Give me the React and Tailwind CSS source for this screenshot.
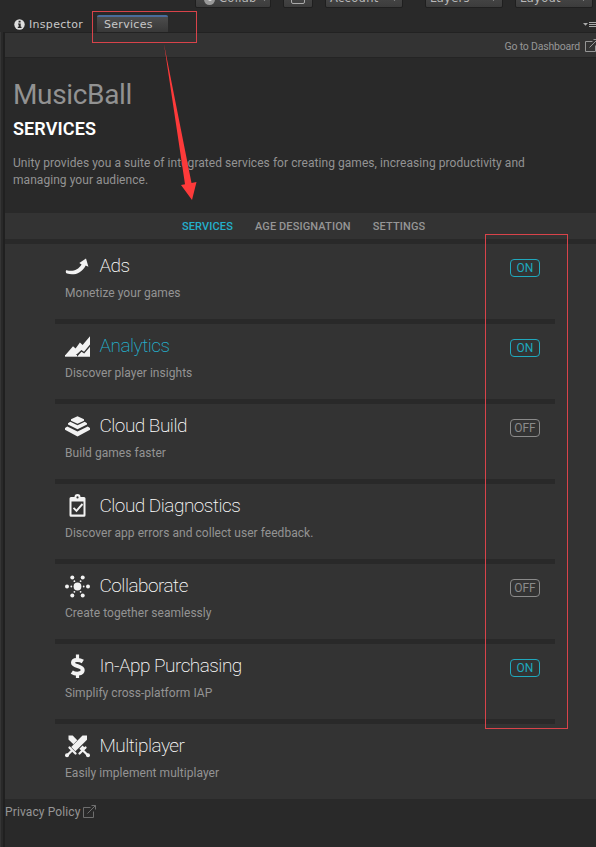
const EDITOR_FONT = "font-['DejaVu_Sans','Noto_Sans',sans-serif]";

function Caret({ className = "" }) {
  return (
    <svg className={`h-[3px] w-[5px] ${className}`} viewBox="0 0 5 3" fill="#999">
      <path d="M0 0h5L2.500 3z" />
    </svg>
  );
}

function ToolButton({ children, className = "" }) {
  return (
    <div
      className={`relative -mt-[10px] flex h-[18px] shrink-0 items-center rounded-[2px] border border-[#1f1f1f] bg-linear-to-b from-[#4c4c4c] to-[#3c3c3c] text-[11.500px] leading-none tracking-[.3px] text-[#b8b8b8] ${className}`}
    >
      {children}
    </div>
  );
}

function Toolbar() {
  return (
    <div className={`flex h-[14px] pl-[195px] ${EDITOR_FONT}`}>
      <ToolButton className="w-[76px] pl-2">
        <span className="flex size-[11px] items-center justify-center rounded-full bg-[#999]">
          <span className="size-[4px] rounded-full bg-[#dedede]" />
        </span>
        <span className="ml-1">Collab</span>
        <Caret className="ml-[5px]" />
      </ToolButton>
      <ToolButton className="ml-[12px] w-[30px] justify-center">
        <span className="h-[9px] w-[14px] rounded-[2px] border border-[#aaa]" />
      </ToolButton>
      <ToolButton className="ml-[12px] w-[78px] pl-[4px]">
        <span>Account</span>
        <Caret className="ml-auto mr-[5px]" />
      </ToolButton>
      <ToolButton className="ml-[22px] w-[78px] pl-[4px]">
        <span>Layers</span>
        <Caret className="ml-auto mr-[6px]" />
      </ToolButton>
      <ToolButton className="ml-[12px] w-[78px] pl-[4px]">
        <span>Layout</span>
        <Caret className="ml-auto mr-[6px]" />
      </ToolButton>
    </div>
  );
}

function EditorTabs() {
  return (
    <div className={`flex h-[18px] items-stretch pl-[14px] text-[11px] tracking-[.3px] text-[#c8c8c8] ${EDITOR_FONT}`}>
      <div className="flex w-[83px] items-center gap-1 pt-[2px]">
        <svg className="size-[11px]" viewBox="0 0 11 11">
          <circle cx="5.500" cy="5.500" r="5.200" fill="#dedede" />
          <path d="M4.600 1.800h2v1.700h-2zM4 4.500h2.700v3.300h.8V9H3.800V7.800h.9V5.600H4z" fill="#252525" />
        </svg>
        <span className="pt-px leading-4">Inspector</span>
      </div>
      <div className="mt-px w-[71px] rounded-t-[2px] border-t-2 border-[#4a6c9b] bg-linear-to-b from-[#4c4c4c] to-[#383838] pl-[7px] leading-[15px]">
        Services
      </div>
      <svg className="ml-auto mt-[7px] h-[8px] w-[13px]" viewBox="0 0 13 8">
        <path d="M0 2h5L2.500 4.700z" fill="#aaa" />
        <path d="M6 1.500h7M6 3.500h7M6 5.500h7" stroke="#aaa" strokeWidth="1" />
      </svg>
    </div>
  );
}

function ExternalIcon({ className = "" }) {
  return (
    <svg
      className={`h-[13px] w-[13px] shrink-0 ${className}`}
      viewBox="0 0 13 13"
      fill="none"
      stroke="currentColor"
      strokeWidth="1"
    >
      <path d="M7.500 2.500h-7v10h10v-6M4.500 8.500l8-8M8.500.500h4v4" />
    </svg>
  );
}

const WHITE = "#f2f2f2";

function AdsIcon() {
  return (
    <path
      d="M1.800 14.300c5.800 1.600 11.300-.2 14.800-5.900L14.300 7 21 2.400l2.400 8.300-2.700-1.300C16.500 17.300 9.200 19.700 2 17.600c-1.500-.5-1.600-3.800-.2-3.300z"
      fill={WHITE}
    />
  );
}

function AnalyticsIcon() {
  return (
    <g fill={WHITE}>
      <path d="M0 19.500 8 10.300l2.600 2.200 4.300-6.100 2.700 2.700L25 .200v8.200l-6 7.300-2.600-1.800-3.800 3.500-2.500 2.100z" />
      <path d="M12 20.700l4.500-4.900 2.700 1.700L25 10.800v9.900z" />
      <path d="M0 19h12v1.700H0z" />
    </g>
  );
}

function BuildIcon() {
  return (
    <g fill={WHITE}>
      <path d="M12.500.2 19 3.300v1.400l-6.500 3L6 4.700V3.300z" />
      <path d="M5.300 5.700l7.200 3.500 7.200-3.500 2.300 1.500v1.400l-9.500 4.700L3 8.600V7.200z" />
      <path d="M2.300 10.500l10.200 5 10.200-5 2.300 1.600v1.700l-12.500 6.700L0 13.800v-1.700z" />
    </g>
  );
}

function DiagnosticsIcon() {
  return (
    <g>
      <path
        d="M6 1h3.500a3 3 0 0 1 6 0H19a1.500 1.500 0 0 1 1.500 1.500v16.700a1.500 1.500 0 0 1-1.500 1.500H6a1.500 1.500 0 0 1-1.500-1.500V2.500A1.500 1.500 0 0 1 6 1zm.5 4.500v13h12v-13zM12.500.3a1.100 1.100 0 1 0 0 2.200 1.100 1.100 0 0 0 0-2.200z"
        fill={WHITE}
        fillRule="evenodd"
      />
      <path d="M8.500 11.800l3 3 6-6.800" fill="none" stroke={WHITE} strokeWidth="1.900" />
    </g>
  );
}

function CollaborateIcon() {
  return (
    <g fill={WHITE}>
      <circle cx="12.500" cy="10.500" r="3.900" />
      <circle cx="2" cy="10.500" r="2" />
      <circle cx="23" cy="10.500" r="2" />
      <circle cx="7.300" cy="1.500" r="2" />
      <circle cx="17.700" cy="1.500" r="2" />
      <circle cx="7.300" cy="19.500" r="2" />
      <circle cx="17.700" cy="19.500" r="2" />
      <circle cx="6.300" cy="10.500" r=".9" />
      <circle cx="18.700" cy="10.500" r=".9" />
      <circle cx="9.400" cy="5.200" r=".9" />
      <circle cx="15.600" cy="5.200" r=".9" />
      <circle cx="9.400" cy="15.800" r=".9" />
      <circle cx="15.600" cy="15.800" r=".9" />
    </g>
  );
}

function PurchasingIcon() {
  return (
    <g fill="none" stroke={WHITE}>
      <path d="M12.500-1.500v5M12.500 17v5" strokeWidth="3.200" />
      <path
        d="M17.800 5.500C14.800 3.600 8 3 8 6.700c0 4.100 9.700 2.900 9.700 7.400 0 4.500-7.400 4.200-10.900 2"
        strokeWidth="4"
      />
    </g>
  );
}

function MultiplayerIcon() {
  return (
    <g fill={WHITE}>
      <path d="M3.500-.500h4.200l4.600 4.800-3.900 4-4.900-4.800z" />
      <path d="M17.500-.500H22v4.200L10.400 15.200 6.200 11z" />
      <path d="M14.400 12.700l3.200-3.200 2.700 2.700-3.200 3.300z" />
      <g stroke={WHITE} fill="none" strokeLinecap="round">
        <path d="M4.500 11.500l6 6" strokeWidth="2.300" />
        <path d="M6.500 15l-4 4" strokeWidth="2.300" />
        <path d="M20.500 11.500l-6 6" strokeWidth="2.300" />
        <path d="M18.500 15l4 4" strokeWidth="2.300" />
      </g>
      <circle cx="2" cy="19.200" r="2" />
      <circle cx="23" cy="19.200" r="2" />
    </g>
  );
}

const services = [
  { name: "Ads", text: "Monetize your games", Icon: AdsIcon, state: "ON" },
  { name: "Analytics", text: "Discover player insights", Icon: AnalyticsIcon, state: "ON", active: true },
  { name: "Cloud Build", text: "Build games faster", Icon: BuildIcon, state: "OFF" },
  { name: "Cloud Diagnostics", text: "Discover app errors and collect user feedback.", Icon: DiagnosticsIcon },
  { name: "Collaborate", text: "Create together seamlessly", Icon: CollaborateIcon, state: "OFF" },
  { name: "In-App Purchasing", text: "Simplify cross-platform IAP", Icon: PurchasingIcon, state: "ON" },
  { name: "Multiplayer", text: "Easily implement multiplayer", Icon: MultiplayerIcon },
];

function ServiceRow({ name, text, Icon, state, active }) {
  return (
    <div className="flex h-20 items-start justify-between border-b-[5px] border-[#292929] pl-[10px] pr-[15px] last:h-[75px] last:border-b-0">
      <div className="pt-[10px]">
        <div className="flex h-6 items-center gap-[9.500px]">
          <svg className="h-[21px] w-[25px] shrink-0 overflow-visible" viewBox="0 0 25 21">
            <Icon />
          </svg>
          <h2
            className={`pb-px text-[19px] font-extralight leading-6 tracking-[-.5px] ${active ? "text-[#24b0cc]" : "text-white"}`}
          >
            {name}
          </h2>
        </div>
        <p className="mt-[7px] text-[12px] leading-4 tracking-[.04px] text-[#939393]">{text}</p>
      </div>
      {state && (
        <span
          className={`mt-[15px] flex h-[18px] w-[30px] items-center justify-center rounded-[4px] border text-[12px] leading-none ${
            state === "ON" ? "border-[#20a8bd] text-[#20a8bd]" : "border-[#8a8a8a] text-[#8a8a8a]"
          }`}
        >
          {state}
        </span>
      )}
    </div>
  );
}

function Annotations() {
  return (
    <div className="pointer-events-none absolute inset-0">
      <div className="absolute left-[92px] top-[11px] h-[32px] w-[105px] border border-[#d8434a]" />
      <div className="absolute left-[485px] top-[234px] h-[495px] w-[83px] border border-[#d8434a]" />
      <svg className="absolute left-0 top-0 h-[210px] w-[210px]" viewBox="0 0 210 210">
        <path d="M164 44l27.500 139 5-1-4.500 18-11-15 4-.800z" fill="#fd3a3a" />
      </svg>
    </div>
  );
}

export default function App() {
  return (
    <div className="relative flex h-[847px] w-[596px] flex-col overflow-hidden bg-[#292929] font-['Roboto',sans-serif]">
      <Toolbar />
      <EditorTabs />
      <div className="flex min-h-0 flex-1">
        <div className="w-[5px] shrink-0 border-l border-r-2 border-l-[#353535] border-r-[#202020]" />
        <main className="flex min-w-0 flex-1 flex-col">
          <div className="flex h-[26px] items-center justify-end border-b border-t border-b-[#242424] border-t-[#222] bg-[#333] text-[10.500px] text-[#969696]">
            <span className="pt-[3px] leading-4 tracking-[-.2px]">Go to Dashboard</span>
            <ExternalIcon className="-mr-[2px] ml-[5px]" />
          </div>
          <header className="h-[155px] pl-2 pt-[20px]">
            <h1 className="text-[28px] leading-[34px] tracking-[-.35px] text-[#929292]">MusicBall</h1>
            <p className="mt-[7px] text-[18px] font-semibold leading-[20px] tracking-[.1px] text-white">SERVICES</p>
            <p className="mt-[16px] w-[530px] text-[12px] leading-[17px] tracking-[.055px] text-[#939393]">
              Unity provides you a suite of integrated services for creating games, increasing productivity and
              managing your audience.
            </p>
          </header>
          <nav className="flex h-[26px] items-center gap-[22px] bg-[#333] pl-[177px] pt-[2px] text-[11px] font-medium tracking-[.12px] text-[#969696]">
            <span className="text-[#24b0cc]">SERVICES</span>
            <span>AGE DESIGNATION</span>
            <span>SETTINGS</span>
          </nav>
          <section className="mt-[5px] h-[555px] bg-[#333] pl-[50px] pr-[41px]">
            {services.map((service) => (
              <ServiceRow key={service.name} {...service} />
            ))}
          </section>
          <footer className="flex items-center gap-[2px] pt-[5px] text-[12px] leading-4 text-[#969696]">
            <span className="tracking-[.12px]">Privacy Policy</span>
            <ExternalIcon className="-mt-[2px] text-[#6e6e6e]" />
          </footer>
        </main>
      </div>
      <Annotations />
    </div>
  );
}
